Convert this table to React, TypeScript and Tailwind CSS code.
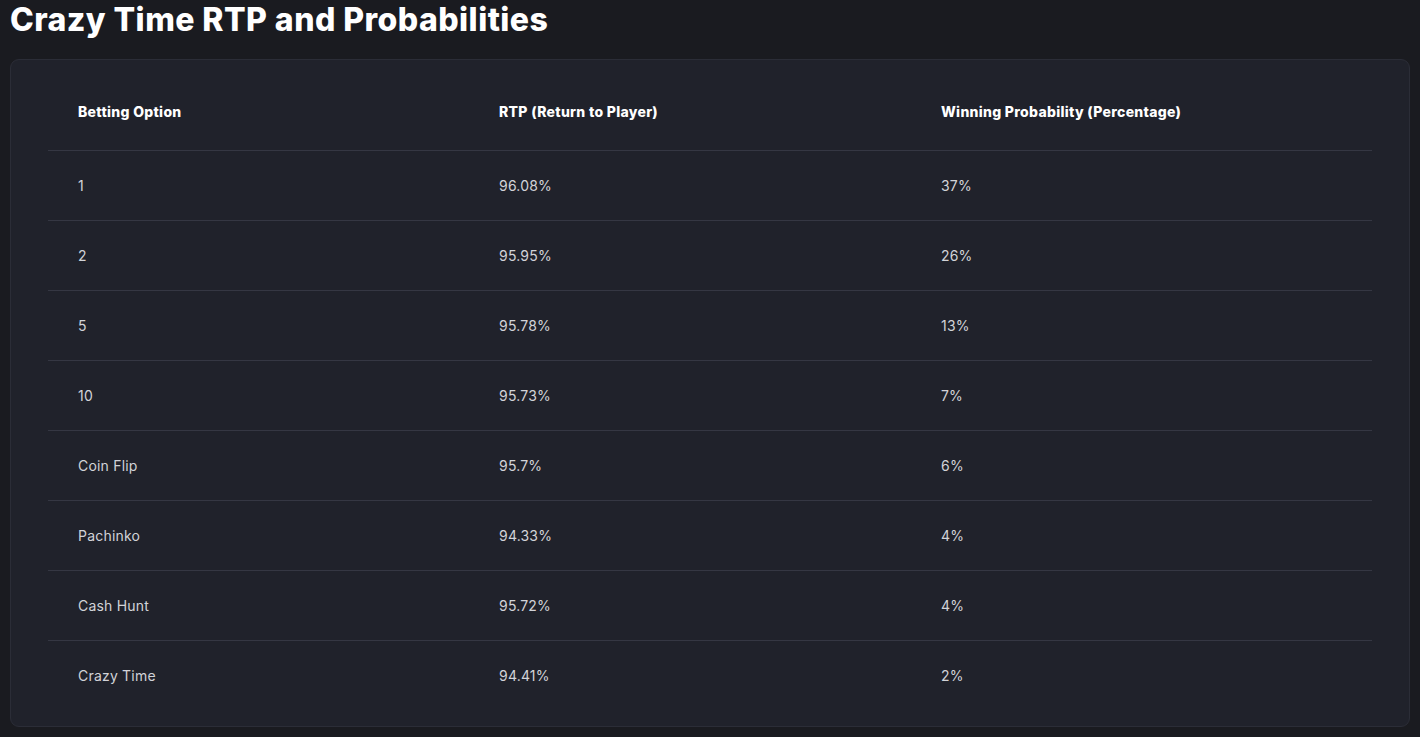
import React from "react";

const rows: Array<[string, string, string]> = [
  ["1", "96.08%", "37%"],
  ["2", "95.95%", "26%"],
  ["5", "95.78%", "13%"],
  ["10", "95.73%", "7%"],
  ["Coin Flip", "95.7%", "6%"],
  ["Pachinko", "94.33%", "4%"],
  ["Cash Hunt", "95.72%", "4%"],
  ["Crazy Time", "94.41%", "2%"],
];

const cols = "grid grid-cols-[421px_442px_1fr]";

export default function App() {
  return (
    <div
      className="min-h-screen bg-[#1a1b20] px-[10px] pb-[10px]"
      style={{ fontFamily: "Inter, 'Noto Sans', sans-serif" }}
    >
      <h2 className="h-[44px] pt-[1px] text-[32px] font-extrabold leading-[38px] tracking-[0.45px] text-white">
        Crazy Time RTP and Probabilities
      </h2>
      <div className="mt-[15px] rounded-[9px] border border-[#2b2d37] bg-[#20222b] px-[37px] pt-[12px] pb-[16px]">
        <div className={`${cols} h-[78px] items-center text-[14px] font-extrabold tracking-[0.3px] text-white`}>
          <div className="pl-[30px]">Betting Option</div>
          <div className="pl-[30px]">RTP (Return to Player)</div>
          <div className="pl-[30px]">Winning Probability (Percentage)</div>
        </div>
        {rows.map(([option, rtp, prob]) => (
          <div
            key={option}
            className={`${cols} h-[70px] items-center border-t border-[#353743] text-[14px] tracking-[0.2px] text-[#d2d3d8]`}
          >
            <div className="pl-[30px]">{option}</div>
            <div className="pl-[30px]">{rtp}</div>
            <div className="pl-[30px]">{prob}</div>
          </div>
        ))}
      </div>
    </div>
  );
}
